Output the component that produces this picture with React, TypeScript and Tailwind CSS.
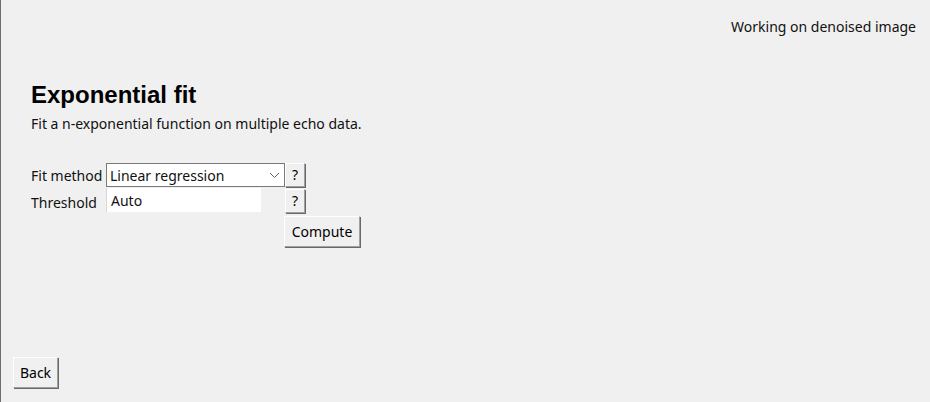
import React from "react"

const ui = { fontFamily: '"Noto Sans", "Open Sans", sans-serif' }

const TkButton = ({ children, className = "" }: { children: React.ReactNode; className?: string }) => (
  <button
    className={
      "flex items-center justify-center bg-[#f0f0f0] text-[14px] leading-none text-black border border-t-white border-l-white border-r-[#a0a0a0] border-b-[#a0a0a0] shadow-[1px_1px_0_#696969] " +
      className
    }
    style={ui}
  >
    {children}
  </button>
)

export default function App() {
  return (
    <div className="w-[930px] h-[402px] bg-[#f0f0f0] flex flex-col border-l border-[#6e6e6e] text-[#111]" style={ui}>
      <div className="flex justify-end pr-[14px] pt-[17px] text-[14px] leading-[20px]">
        Working on denoised image
      </div>

      <div className="pl-[30px] pt-[44px] flex flex-col">
        <h1
          className="text-[24px] leading-[28px] font-bold text-black"
          style={{ fontFamily: '"Liberation Sans", Arial, sans-serif' }}
        >
          Exponential fit
        </h1>
        <p className="text-[14px] leading-[20px] mt-[5px]">Fit a n-exponential function on multiple echo data.</p>

        <div className="mt-[29px] flex flex-col">
          <div className="flex items-center h-[24px]">
            <span className="w-[75px] text-[14px] leading-[24px] pt-[2px]">Fit method</span>
            <div className="w-[179px] h-[24px] bg-white border border-[#7a7a7a] flex items-center justify-between pl-[3px] pr-[4px] text-[14px]">
              <span>Linear regression</span>
              <svg width="11" height="7" viewBox="0 0 11 7" fill="none" stroke="#606060" strokeWidth="1">
                <path d="M1 1 L5.5 5.5 L10 1" />
              </svg>
            </div>
            <TkButton className="w-[20px] h-[24px]">?</TkButton>
          </div>
          <div className="flex items-start h-[25px] mt-[1px]">
            <span className="w-[75px] text-[14px] leading-[24px] pt-[3px]">Threshold</span>
            <div className="w-[155px] h-[24px] bg-white border-l border-[#d8d8d8] flex items-center pl-[4px] text-[14px]">
              Auto
            </div>
            <div className="w-[24px]" />
            <TkButton className="w-[20px] h-[24px] mt-[1px]">?</TkButton>
          </div>
          <div className="flex mt-[3px] pl-[253px]">
            <TkButton className="w-[76px] h-[31px]">Compute</TkButton>
          </div>
        </div>
      </div>

      <div className="mt-auto pl-[12px] pb-[14px]">
        <TkButton className="w-[45px] h-[31px]">Back</TkButton>
      </div>
    </div>
  )
}
